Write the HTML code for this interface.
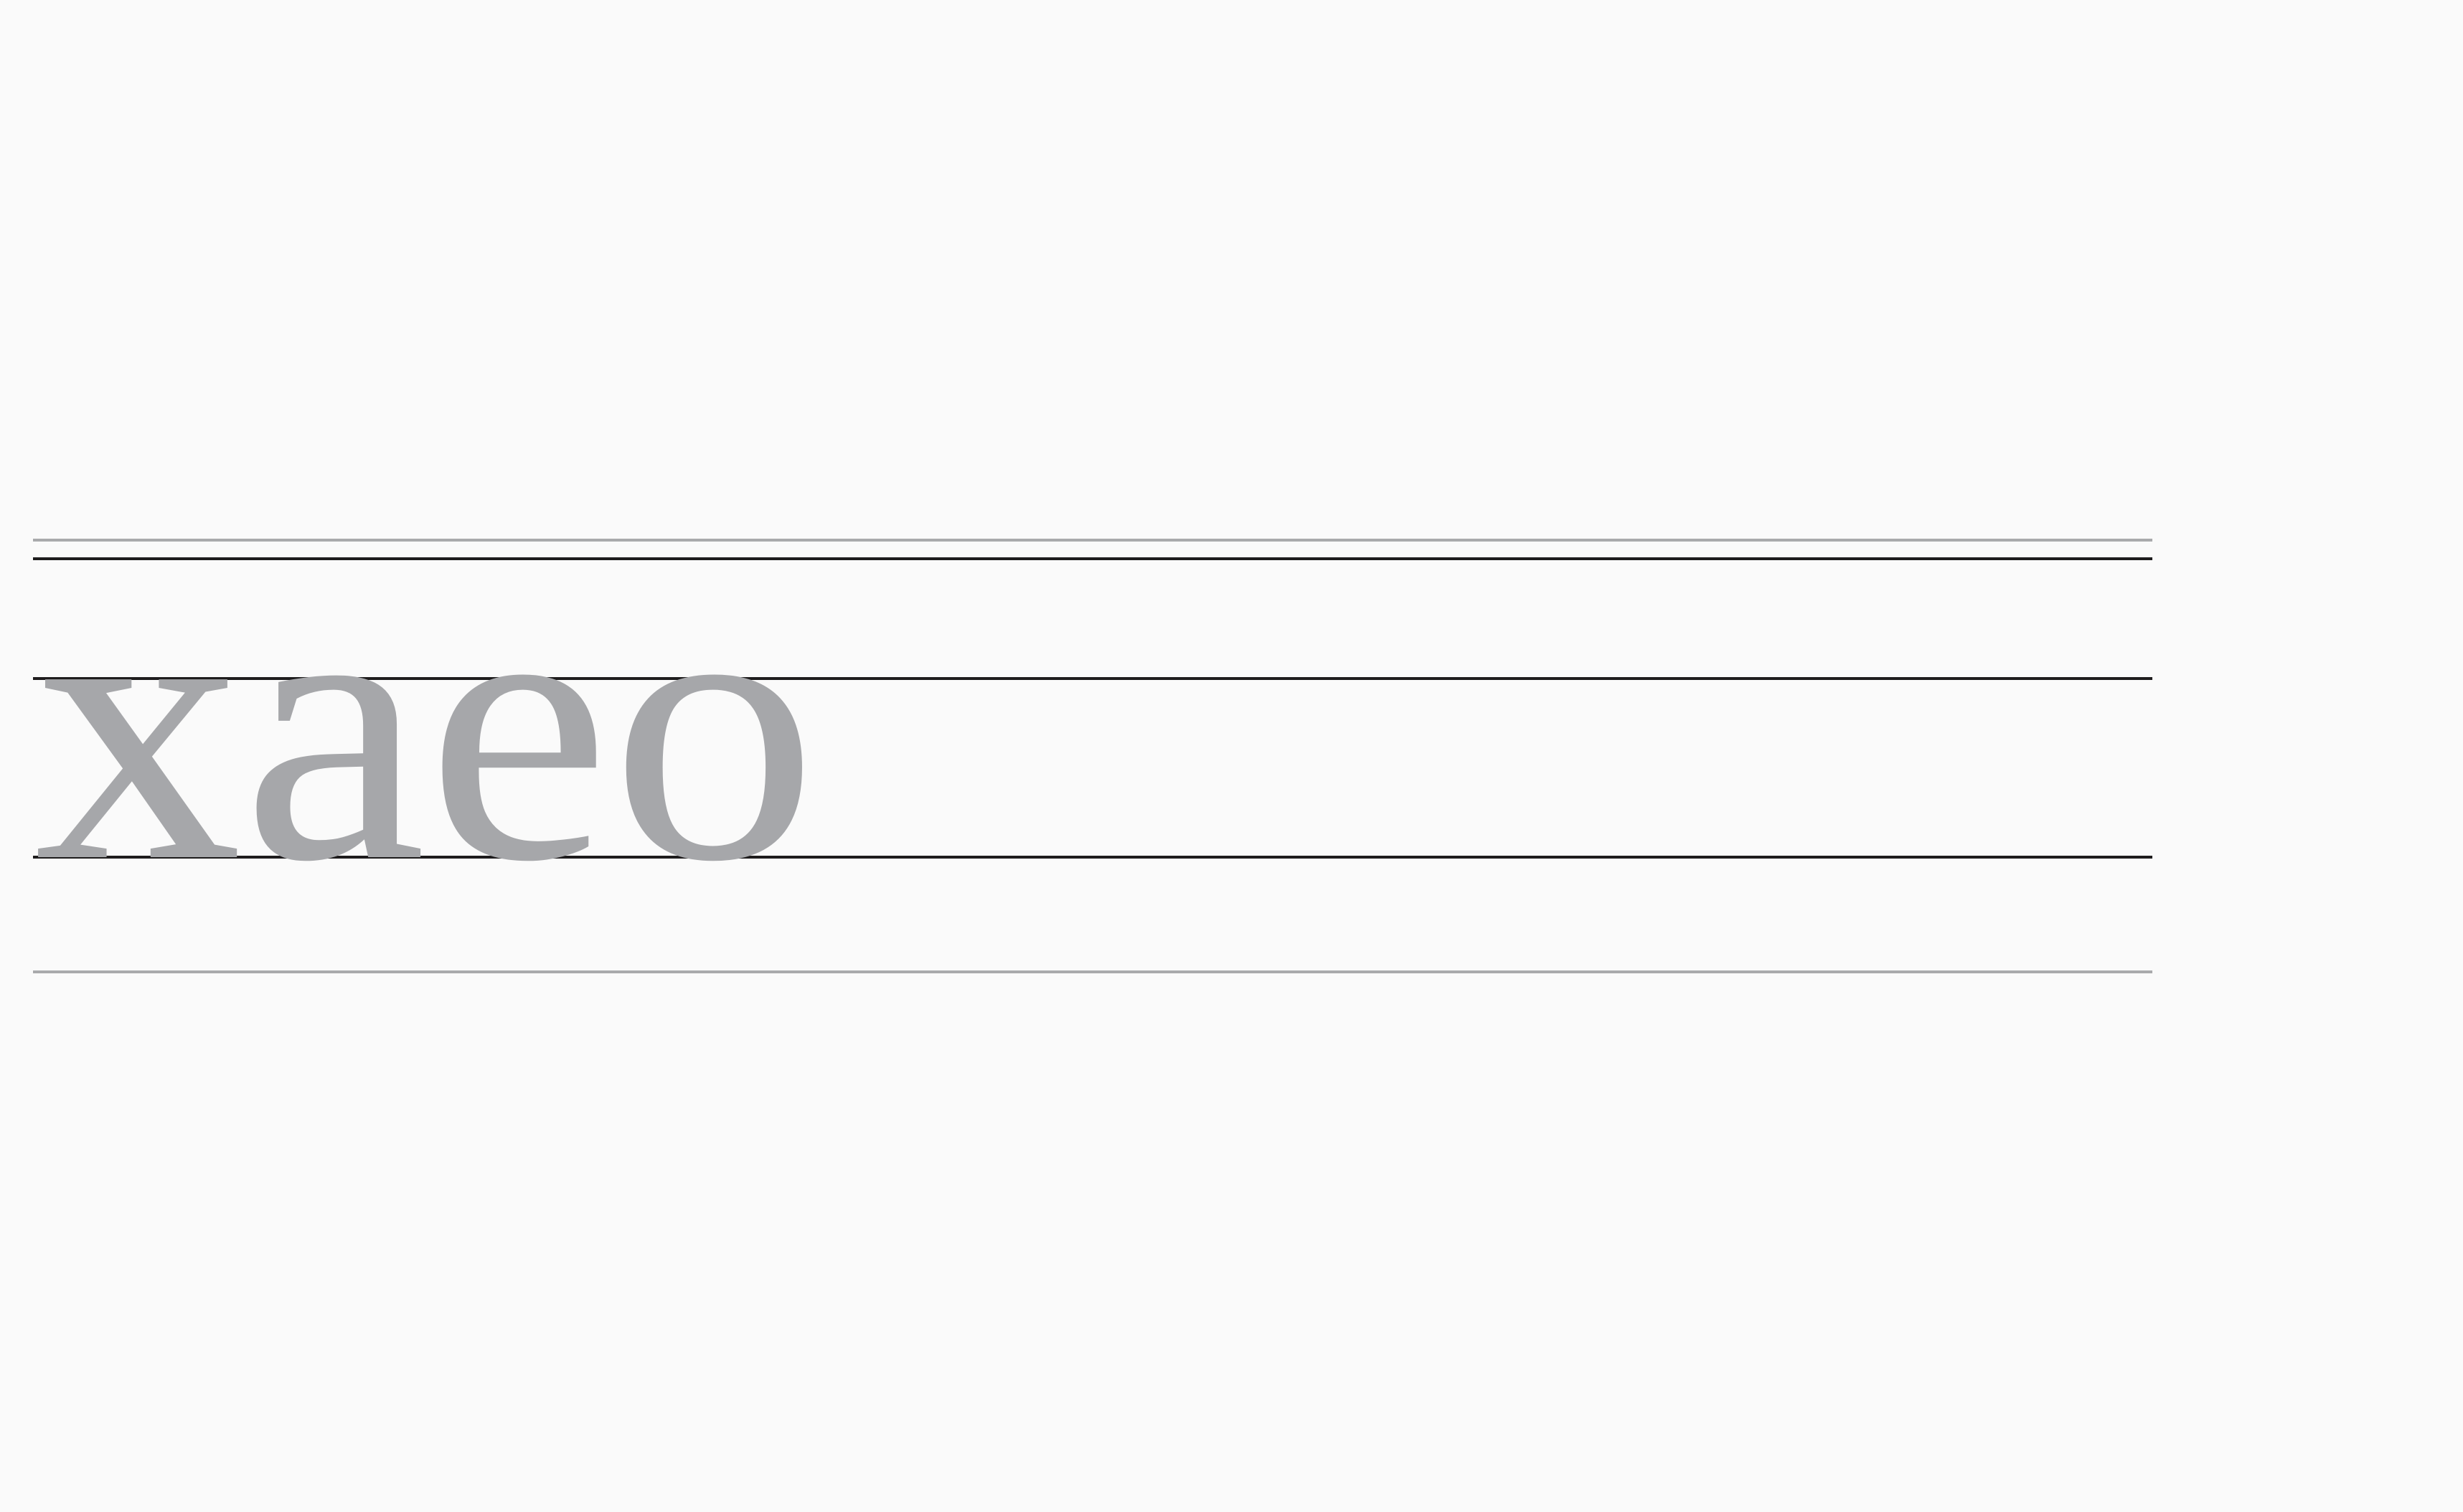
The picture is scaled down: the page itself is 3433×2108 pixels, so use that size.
<!DOCTYPE html>
<html><head><meta charset="utf-8"><style>
html,body{margin:0;padding:0;background:#fafafa;width:3433px;height:2108px;overflow:hidden}
svg{position:absolute;left:0;top:0}
</style></head><body>
<svg width="3433" height="2108" viewBox="0 0 3433 2108" xmlns="http://www.w3.org/2000/svg">
<rect width="3433" height="2108" fill="#fafafa"/>
<rect x="46" y="751" width="2954" height="4" fill="#a9aaac"/>
<rect x="46" y="777" width="2954" height="4" fill="#1e1c1d"/>
<rect x="46" y="944" width="2954" height="4" fill="#1e1c1d"/>
<rect x="46" y="1193" width="2954" height="4" fill="#1e1c1d"/>
<rect x="46" y="1353" width="2954" height="4" fill="#a9aaac"/>
<text x="48" y="1195" font-family="Liberation Serif, serif" font-size="540" fill="#a6a7aa" textLength="1092" lengthAdjust="spacingAndGlyphs">xaeo</text>
</svg>
</body></html>
